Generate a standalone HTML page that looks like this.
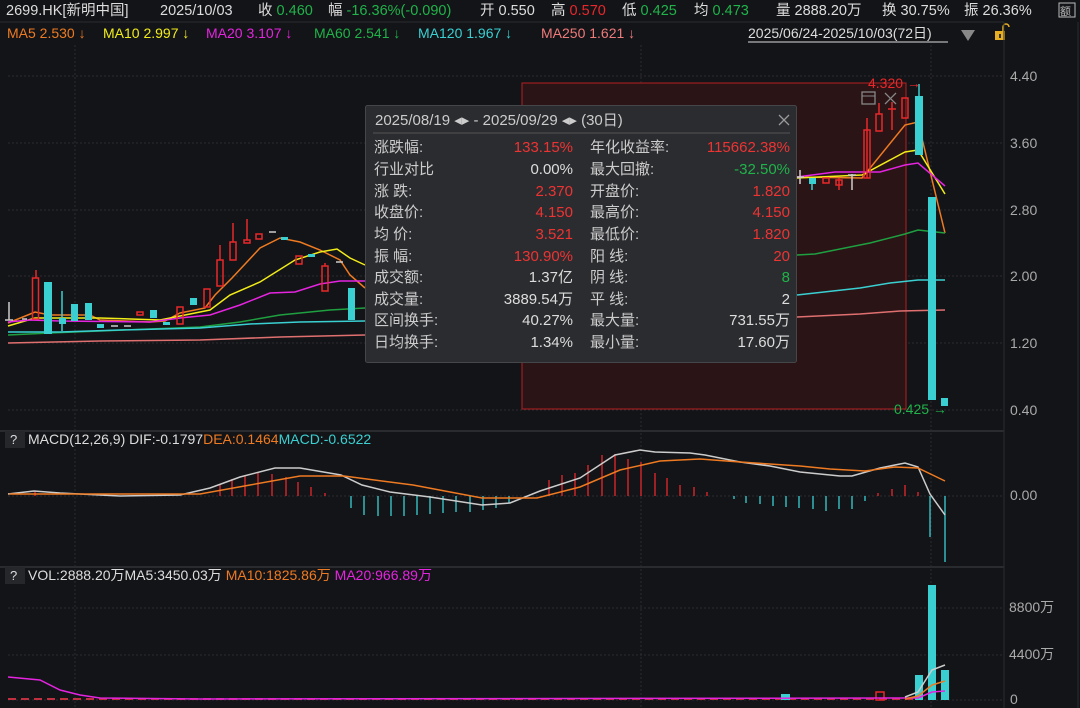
<!DOCTYPE html><html><head><meta charset="utf-8"><style>
body{margin:0;background:#131417;width:1080px;height:708px;overflow:hidden;font-family:"Liberation Sans","Noto Sans CJK SC",sans-serif;}
svg{position:absolute;left:0;top:0}
.t{font-family:"Liberation Sans","Noto Sans CJK SC",sans-serif}
</style></head><body>
<svg width="1080" height="708" viewBox="0 0 1080 708" class="t">
<rect width="1080" height="708" fill="#131417"/>
<!-- header -->
<g font-size="14.5" fill="#ddd">
<text x="6" y="15">2699.HK[新明中国]</text>
<text x="160" y="15">2025/10/03</text>
<text x="258" y="15">收 <tspan fill="#1fb34a">0.460</tspan></text>
<text x="328" y="15">幅 <tspan fill="#1fb34a">-16.36%(-0.090)</tspan></text>
<text x="480" y="15">开 0.550</text>
<text x="551" y="15">高 <tspan fill="#e8282b">0.570</tspan></text>
<text x="622" y="15">低 <tspan fill="#1fb34a">0.425</tspan></text>
<text x="694" y="15">均 <tspan fill="#1fb34a">0.473</tspan></text>
<text x="776" y="15">量 2888.20万</text>
<text x="882" y="15">换 30.75%</text>
<text x="964" y="15">振 26.36%</text>
</g>
<rect x="1059" y="3" width="16" height="14" fill="none" stroke="#bbb" stroke-width="1"/>
<text x="1060" y="15" font-size="11" fill="#bbb">额</text>
<line x1="0" y1="22" x2="1004" y2="22" stroke="#2a2b2f"/>
<g font-size="14">
<text x="7" y="38" fill="#ee7a22">MA5 2.530 ↓</text>
<text x="103" y="38" fill="#f2ec19">MA10 2.997 ↓</text>
<text x="206" y="38" fill="#e524e0">MA20 3.107 ↓</text>
<text x="314" y="38" fill="#1fb34a">MA60 2.541 ↓</text>
<text x="418" y="38" fill="#3ad0d2">MA120 1.967 ↓</text>
<text x="541" y="38" fill="#ee7a7a">MA250 1.621 ↓</text>
<text x="748" y="38" fill="#ddd">2025/06/24-2025/10/03(72日)</text>
</g>
<line x1="748" y1="42" x2="948" y2="42" stroke="#ddd"/>
<polygon points="961,30 975,30 968,41" fill="#888"/>
<rect x="995" y="31" width="10" height="9" fill="#e8b020"/>
<path d="M1003 31 v-4 a3 3 0 0 1 6 0" fill="none" stroke="#e8b020" stroke-width="1.5"/>
<rect x="999" y="34" width="2" height="4" fill="#333"/>
<line x1="1004" y1="22" x2="1004" y2="708" stroke="#2a2b2f"/>
<line x1="1078" y1="22" x2="1078" y2="708" stroke="#2a2b2f"/>
<!-- grid -->
<g stroke="#2c2d31" stroke-dasharray="2,2">
<line x1="8" y1="76" x2="1004" y2="76"/><line x1="8" y1="143" x2="1004" y2="143"/>
<line x1="8" y1="210" x2="1004" y2="210"/><line x1="8" y1="276" x2="1004" y2="276"/>
<line x1="8" y1="343" x2="1004" y2="343"/><line x1="8" y1="410" x2="1004" y2="410"/>
<line x1="8" y1="496" x2="1004" y2="496"/>
<line x1="8" y1="608" x2="1004" y2="608"/><line x1="8" y1="655" x2="1004" y2="655"/><line x1="8" y1="700" x2="1004" y2="700"/>
<line x1="75" y1="45" x2="75" y2="708"/><line x1="641" y1="45" x2="641" y2="708"/><line x1="931" y1="45" x2="931" y2="708"/>
</g>
<g font-size="14" fill="#aaa">
<text x="1010" y="81">4.40</text><text x="1010" y="148">3.60</text><text x="1010" y="215">2.80</text>
<text x="1010" y="281">2.00</text><text x="1010" y="348">1.20</text><text x="1010" y="415">0.40</text>
<text x="1010" y="500">0.00</text>
<text x="1009" y="612">8800万</text><text x="1009" y="659">4400万</text><text x="1010" y="704">0</text>
</g>
<line x1="0" y1="431" x2="1004" y2="431" stroke="#2a2b2f" stroke-width="2"/>
<line x1="0" y1="567" x2="1004" y2="567" stroke="#2a2b2f" stroke-width="2"/>
<!-- selection region -->
<rect x="522" y="83" width="384" height="326" fill="#2a1416" stroke="#b52020" stroke-width="1"/>
<!-- MA lines -->
<g fill="none" stroke-width="1.5">
<polyline stroke="#ee7a22" points="8,323 35,312 50,315 90,315 100,320 150,322 165,321 180,313 205,308 215,295 232,278 260,248 280,238 300,242 320,250 340,260 350,275 365,288"/>
<polyline stroke="#f2ec19" points="8,326 35,318 100,318 160,320 180,316 210,310 230,295 260,282 295,260 320,252 337,249 350,258 365,265"/>
<polyline stroke="#e524e0" points="8,322 30,320 60,321 150,322 180,318 210,315 240,305 270,293 295,292 320,284 340,281 365,281"/>
<polyline stroke="#1fa040" points="8,335 50,333 100,331 150,329 200,327 240,322 280,315 330,310 365,308"/>
<polyline stroke="#3ad0d2" points="8,332 60,332 120,330 200,328 250,324 300,322 365,321"/>
<polyline stroke="#e07070" points="8,343 100,341 200,340 280,337 365,335"/>
<polyline stroke="#ee7a22" points="797,177 862,178 905,125 918,122 945,233"/>
<polyline stroke="#f2ec19" points="797,178 862,175 905,152 918,150 945,194"/>
<polyline stroke="#e524e0" points="797,177 835,172 880,172 905,165 918,163 945,186"/>
<polyline stroke="#1fa040" points="797,255 815,254 870,243 905,234 918,230 945,233"/>
<polyline stroke="#3ad0d2" points="797,295 860,288 890,283 918,280 945,280"/>
<polyline stroke="#e07070" points="797,317 860,314 900,311 945,310"/>
</g>
<!-- candles -->
<g stroke-width="1.5">
<line x1="9" y1="302" x2="9" y2="320" stroke="#ccc"/><line x1="5" y1="320" x2="13" y2="320" stroke="#ccc"/>
<line x1="22" y1="319" x2="27" y2="319" stroke="#ccc"/>
<line x1="36" y1="270" x2="36" y2="278" stroke="#e8282b"/><rect x="32.5" y="278" width="6" height="41" fill="none" stroke="#e8282b"/>
<rect x="44" y="282" width="8" height="52" fill="#3ad0d2"/>
<rect x="59" y="318" width="7" height="6" fill="#3ad0d2"/><line x1="62" y1="291" x2="62" y2="331" stroke="#3ad0d2"/>
<rect x="71" y="304" width="7" height="17" fill="#3ad0d2"/>
<rect x="85" y="303" width="7" height="17" fill="#3ad0d2"/>
<rect x="97" y="324" width="7" height="4" fill="#3ad0d2"/>
<line x1="111" y1="326" x2="118" y2="326" stroke="#ccc"/><line x1="124" y1="326" x2="131" y2="326" stroke="#ccc"/>
<rect x="137" y="312" width="6" height="3" fill="none" stroke="#e8282b"/>
<rect x="150" y="310" width="7" height="8" fill="#3ad0d2"/>
<rect x="163" y="322" width="7" height="3" fill="#3ad0d2"/>
<rect x="177" y="307" width="6" height="17" fill="none" stroke="#e8282b"/>
<rect x="190" y="298" width="7" height="7" fill="#3ad0d2"/>
<rect x="204" y="289" width="6" height="18" fill="none" stroke="#e8282b"/>
<line x1="220" y1="245" x2="220" y2="260" stroke="#e8282b"/><rect x="217" y="260" width="6" height="26" fill="none" stroke="#e8282b"/>
<line x1="233" y1="223" x2="233" y2="242" stroke="#e8282b"/><rect x="230" y="242" width="6" height="18" fill="none" stroke="#e8282b"/>
<line x1="247" y1="219" x2="247" y2="240" stroke="#e8282b"/><rect x="244" y="240" width="6" height="3" fill="none" stroke="#e8282b"/>
<rect x="256" y="234" width="6" height="5" fill="none" stroke="#e8282b"/>
<line x1="269" y1="232" x2="276" y2="232" stroke="#ccc"/>
<rect x="281" y="237" width="7" height="3" fill="#3ad0d2"/>
<rect x="296" y="256" width="6" height="8" fill="none" stroke="#e8282b"/>
<rect x="308" y="254" width="7" height="3" fill="#3ad0d2"/>
<line x1="336" y1="262" x2="343" y2="262" stroke="#ccc"/>
<line x1="325" y1="263" x2="325" y2="266" stroke="#e8282b"/><rect x="322" y="266" width="6" height="25" fill="none" stroke="#e8282b"/>
<rect x="348" y="288" width="7" height="32" fill="#3ad0d2"/>
<line x1="800" y1="170" x2="800" y2="184" stroke="#ccc"/><line x1="796" y1="177" x2="804" y2="177" stroke="#ccc"/>
<rect x="809" y="178" width="7" height="6" fill="#3ad0d2"/><line x1="812" y1="178" x2="812" y2="190" stroke="#3ad0d2"/>
<rect x="823" y="178" width="6" height="5" fill="none" stroke="#e8282b"/>
<line x1="839" y1="178" x2="839" y2="190" stroke="#e8282b"/><rect x="836" y="180" width="6" height="5" fill="none" stroke="#e8282b"/>
<line x1="852" y1="174" x2="852" y2="190" stroke="#ccc"/><line x1="848" y1="175" x2="856" y2="175" stroke="#ccc"/>
<line x1="867" y1="118" x2="867" y2="178" stroke="#e8282b"/><rect x="864" y="130" width="6" height="48" fill="none" stroke="#e8282b"/>
<line x1="879" y1="103" x2="879" y2="114" stroke="#e8282b"/><rect x="876" y="114" width="6" height="17" fill="none" stroke="#e8282b"/>
<line x1="892" y1="102" x2="892" y2="130" stroke="#e8282b"/><line x1="888" y1="109" x2="896" y2="109" stroke="#e8282b"/>
<rect x="902" y="98" width="6" height="20" fill="none" stroke="#e8282b"/>
<line x1="919" y1="84" x2="919" y2="96" stroke="#3ad0d2"/><rect x="915" y="96" width="8" height="59" fill="#3ad0d2"/>
<rect x="928" y="197" width="8" height="203" fill="#3ad0d2"/>
<rect x="941" y="398" width="7" height="8" fill="#3ad0d2"/>
</g>
<text x="868" y="88" font-size="14" fill="#e8282b">4.320 →</text>
<text x="894" y="414" font-size="14" fill="#1fb34a">0.425 →</text>
<rect x="862" y="92" width="13" height="12" fill="none" stroke="#888" stroke-width="1.3"/><line x1="862" y1="96" x2="875" y2="96" stroke="#888"/>
<path d="M885 93 l11 11 M896 93 l-11 11" stroke="#888" stroke-width="1.3"/>
<!-- tooltip -->
<rect x="365.5" y="105.5" width="431" height="257" rx="2" fill="#2b2c2f" stroke="#45464a"/>
<text x="375" y="125" font-size="15" fill="#ccc">2025/08/19 ◂▸ - 2025/09/29 ◂▸   (30日)</text>
<path d="M779 115 l10 10 M789 115 l-10 10" stroke="#999" stroke-width="1.3"/>
<line x1="373" y1="133" x2="790" y2="133" stroke="#555"/>
<g font-size="15" fill="#ccc">
<text x="374" y="152">涨跌幅:</text><text x="374" y="174">行业对比</text><text x="374" y="196">涨  跌:</text><text x="374" y="217">收盘价:</text><text x="374" y="239">均  价:</text><text x="374" y="261">振  幅:</text><text x="374" y="282">成交额:</text><text x="374" y="304">成交量:</text><text x="374" y="325">区间换手:</text><text x="374" y="347">日均换手:</text>
<text x="590" y="152">年化收益率:</text><text x="590" y="174">最大回撤:</text><text x="590" y="196">开盘价:</text><text x="590" y="217">最高价:</text><text x="590" y="239">最低价:</text><text x="590" y="261">阳  线:</text><text x="590" y="282">阴  线:</text><text x="590" y="304">平 线:</text><text x="590" y="325">最大量:</text><text x="590" y="347">最小量:</text>
</g>
<g font-size="15" text-anchor="end">
<text x="573" y="152" fill="#ee3333">133.15%</text><text x="573" y="174" fill="#ddd">0.00%</text><text x="573" y="196" fill="#ee3333">2.370</text><text x="573" y="217" fill="#ee3333">4.150</text><text x="573" y="239" fill="#ee3333">3.521</text><text x="573" y="261" fill="#ee3333">130.90%</text><text x="573" y="282" fill="#ddd">1.37亿</text><text x="573" y="304" fill="#ddd">3889.54万</text><text x="573" y="325" fill="#ddd">40.27%</text><text x="573" y="347" fill="#ddd">1.34%</text>
<text x="790" y="152" fill="#ee3333">115662.38%</text><text x="790" y="174" fill="#1fb34a">-32.50%</text><text x="790" y="196" fill="#ee3333">1.820</text><text x="790" y="217" fill="#ee3333">4.150</text><text x="790" y="239" fill="#ee3333">1.820</text><text x="790" y="261" fill="#ee3333">20</text><text x="790" y="282" fill="#1fb34a">8</text><text x="790" y="304" fill="#ddd">2</text><text x="790" y="325" fill="#ddd">731.55万</text><text x="790" y="347" fill="#ddd">17.60万</text>
</g>
<!-- MACD -->
<rect x="5" y="431" width="20" height="17" fill="#26272b"/>
<text x="10" y="444" font-size="13" fill="#ddd">?</text>
<text x="28" y="444" font-size="14" fill="#ddd">MACD(12,26,9)  DIF:-0.1797<tspan fill="#ee7a22">DEA:0.1464</tspan><tspan fill="#3ad0d2">MACD:-0.6522</tspan></text>
<g stroke-width="1.3" stroke="#e8282b">
<line x1="35" y1="496" x2="35" y2="491"/><line x1="220" y1="496" x2="220" y2="484"/><line x1="232" y1="496" x2="232" y2="479"/><line x1="245" y1="496" x2="245" y2="476"/><line x1="258" y1="496" x2="258" y2="473"/><line x1="272" y1="496" x2="272" y2="474"/><line x1="286" y1="496" x2="286" y2="477"/><line x1="298" y1="496" x2="298" y2="482"/><line x1="311" y1="496" x2="311" y2="487"/><line x1="325" y1="496" x2="325" y2="493"/>
<line x1="549" y1="496" x2="549" y2="480"/><line x1="562" y1="496" x2="562" y2="475"/><line x1="575" y1="496" x2="575" y2="473"/><line x1="588" y1="496" x2="588" y2="465"/><line x1="602" y1="496" x2="602" y2="455"/><line x1="615" y1="496" x2="615" y2="454"/><line x1="628" y1="496" x2="628" y2="459"/><line x1="641" y1="496" x2="641" y2="462"/><line x1="655" y1="496" x2="655" y2="473"/><line x1="667" y1="496" x2="667" y2="478"/><line x1="680" y1="496" x2="680" y2="485"/><line x1="694" y1="496" x2="694" y2="487"/><line x1="707" y1="496" x2="707" y2="492"/>
<line x1="878" y1="496" x2="878" y2="493"/><line x1="892" y1="496" x2="892" y2="489"/><line x1="905" y1="496" x2="905" y2="485"/><line x1="918" y1="496" x2="918" y2="492"/>
</g>
<g stroke-width="1.3" stroke="#3ad0d2">
<line x1="351" y1="496" x2="351" y2="508"/><line x1="364" y1="496" x2="364" y2="515"/><line x1="378" y1="496" x2="378" y2="516"/><line x1="391" y1="496" x2="391" y2="516"/><line x1="404" y1="496" x2="404" y2="516"/><line x1="417" y1="496" x2="417" y2="515"/><line x1="430" y1="496" x2="430" y2="514"/><line x1="443" y1="496" x2="443" y2="513"/><line x1="456" y1="496" x2="456" y2="512"/><line x1="470" y1="496" x2="470" y2="512"/><line x1="483" y1="496" x2="483" y2="510"/><line x1="496" y1="496" x2="496" y2="508"/><line x1="509" y1="496" x2="509" y2="503"/>
<line x1="734" y1="496" x2="734" y2="499"/><line x1="746" y1="496" x2="746" y2="503"/><line x1="760" y1="496" x2="760" y2="504"/><line x1="773" y1="496" x2="773" y2="506"/><line x1="786" y1="496" x2="786" y2="507"/><line x1="799" y1="496" x2="799" y2="508"/><line x1="813" y1="496" x2="813" y2="509"/><line x1="826" y1="496" x2="826" y2="511"/><line x1="839" y1="496" x2="839" y2="509"/><line x1="852" y1="496" x2="852" y2="509"/><line x1="865" y1="496" x2="865" y2="501"/>
<line x1="930" y1="496" x2="930" y2="537"/><line x1="945" y1="496" x2="945" y2="562"/>
</g>
<g fill="none" stroke-width="1.5">
<polyline stroke="#ccc" points="8,494 34,491 60,493 120,496 180,495 210,488 240,477 275,468 300,468 341,475 362,485 390,492 430,497 482,505 510,503 540,491 580,478 615,455 640,450 655,452 690,453 705,455 740,462 770,466 800,472 840,476 852,476 880,468 905,463 918,467 930,494 945,515"/>
<polyline stroke="#ee7a22" points="9,494 100,494 200,494 250,485 300,476 344,476 413,485 482,498 537,498 580,487 620,470 660,461 700,459 740,462 800,466 830,469 865,471 895,467 918,468 945,481"/>
</g>
<!-- VOL -->
<rect x="5" y="567" width="20" height="17" fill="#26272b"/>
<text x="10" y="580" font-size="13" fill="#ddd">?</text>
<text x="28" y="580" font-size="14" fill="#ddd">VOL:2888.20万MA5:3450.03万 <tspan fill="#ee7a22">MA10:1825.86万</tspan> <tspan fill="#e524e0">MA20:966.89万</tspan></text>
<g stroke-width="2" stroke-dasharray="8,5">
<line x1="8" y1="699" x2="920" y2="699" stroke="#c03040"/>
</g>
<rect x="781" y="694" width="9" height="6" fill="#3ad0d2"/>
<rect x="876" y="692" width="8" height="8" fill="none" stroke="#e8282b" stroke-width="1.5"/>
<rect x="915" y="675" width="8" height="25" fill="#3ad0d2"/>
<rect x="928" y="585" width="8" height="115" fill="#3ad0d2"/>
<rect x="941" y="670" width="8" height="30" fill="#3ad0d2"/>
<g fill="none" stroke-width="1.5">
<polyline stroke="#e524e0" points="8,677 40,680 60,690 80,695 100,698 200,699 918,698 932,692 945,691"/>
<polyline stroke="#ccc" points="905,697 918,692 932,670 945,665"/>
<polyline stroke="#ee7a22" points="905,699 918,696 932,685 945,681"/>
</g>
</svg>
</body></html>
